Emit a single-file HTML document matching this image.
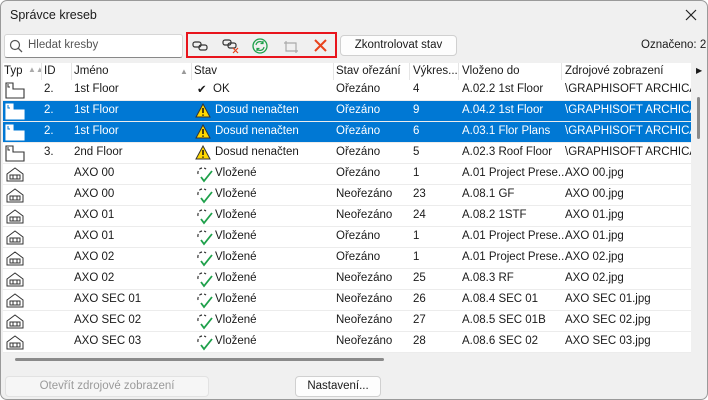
<!DOCTYPE html>
<html><head><meta charset="utf-8"><style>
*{margin:0;padding:0;box-sizing:border-box}
body{width:708px;height:400px;overflow:hidden;background:#fff;font-family:"Liberation Sans",sans-serif;font-size:11.5px;color:#1a1a1a}
#win{position:absolute;left:0;top:0;width:708px;height:400px;background:#f0f0f0;border:1px solid #9a9a9a;border-radius:7px;overflow:hidden}
.a{position:absolute;white-space:nowrap}
#table{position:absolute;left:2px;top:62px;width:688px;height:290px;background:#fff}
.row{position:absolute;left:0;width:688px;height:21px;border-bottom:1px solid #ececec}
.row span{position:absolute;top:3px;white-space:nowrap}
.sel{background:#0078d4;color:#fff}
.hd span{position:absolute;top:2px}
.sep{position:absolute;top:0;width:1px;height:17px;background:#e5e5e5}
.btn{position:absolute;background:#fdfdfd;border:1px solid #d0d0d0;border-radius:4px;text-align:center;line-height:19px}
</style></head><body><div id="win">
<div class="a" style="left:9px;top:7px;font-size:12.5px">Správce kreseb</div>
<svg class="a" style="left:684px;top:8px" width="12" height="12"><path d="M1 1L11 11M11 1L1 11" stroke="#222" stroke-width="1.2"/></svg>
<div class="a" style="left:3px;top:33px;width:179px;height:24px;background:#fff;border:1px solid #d6d6d6;border-bottom-color:#888;border-radius:3px"></div>
<svg class="a" style="left:8px;top:38px" width="14" height="14"><circle cx="6" cy="6" r="4.5" fill="none" stroke="#555" stroke-width="1.2"/><path d="M9.3 9.3L13 13" stroke="#555" stroke-width="1.3"/></svg>
<div class="a" style="left:27px;top:38px;color:#555">Hledat kresby</div>
<div class="a" style="left:185px;top:31px;width:151px;height:26px;border:2px solid #e8141c"></div>
<svg class="a" style="left:190px;top:36px" width="140" height="18">
<g fill="none" stroke="#333" stroke-width="1.2"><rect x="2" y="5" width="8" height="5" rx="2"/><rect x="8" y="8" width="8" height="5" rx="2"/></g>
<g fill="none" stroke="#333" stroke-width="1.2"><rect x="32" y="3" width="8" height="5" rx="2"/><rect x="37" y="6" width="8" height="5" rx="2"/></g><path d="M42 11l5 5M47 11l-5 5" stroke="#e8431c" stroke-width="1.2"/>
<circle cx="69" cy="9" r="7" fill="none" stroke="#1ea04a" stroke-width="1.3"/><path d="M65 8a4 4 0 0 1 7-2M73 10a4 4 0 0 1-7 2M72 4v2.5h-2.5M66 14v-2.5h2.5" fill="none" stroke="#1ea04a" stroke-width="1.2"/>
<path d="M95 4v10h12M93 6h12v10" fill="none" stroke="#aaa" stroke-width="1.2"/>
<path d="M124 3l11 11M135 3l-11 11" stroke="#e8431c" stroke-width="2"/>
</svg>
<div class="btn" style="left:339px;top:34px;width:117px;height:21px">Zkontrolovat stav</div>
<div class="a" style="left:640px;top:38px">Označeno: 2</div>
<div id="table">
<div class="row hd" style="top:0;height:17px;border:0">
<span style="left:1px">Typ</span><span style="left:25px;top:2px;color:#aaa;font-size:8px">▲▲</span><div class="sep" style="left:38px"></div>
<span style="left:41px">ID</span><div class="sep" style="left:68px"></div>
<span style="left:71px">Jméno</span><span style="left:177px;top:4px;color:#999;font-size:8px">▲</span><div class="sep" style="left:188px"></div>
<span style="left:191px">Stav</span><div class="sep" style="left:330px"></div>
<span style="left:333px">Stav ořezání</span><div class="sep" style="left:406px"></div>
<span style="left:410px">Výkres...</span><div class="sep" style="left:455px"></div>
<span style="left:459px">Vloženo do</span><div class="sep" style="left:558px"></div>
<span style="left:562px">Zdrojové zobrazení</span><span style="left:693px;top:3px;font-size:8px">▶</span>
</div>
</div>
<div class="a" style="left:696px;top:96px;width:3px;height:42px;background:#8a8a8a;border-radius:2px"></div>
<div class="a" style="left:14px;top:357px;width:369px;height:3px;background:#8a8a8a;border-radius:2px"></div>
<div class="btn" style="left:4px;top:375px;width:204px;height:21px;color:#9a9a9a;background:#f6f6f6;border-color:#e2e2e2">Otevřít zdrojové zobrazení</div>
<div class="btn" style="left:294px;top:375px;width:86px;height:21px">Nastavení...</div>
</div>
<script>
const rows=[
["L","2.","1st Floor","ok","OK","Ořezáno","4","A.02.2 1st Floor","\\GRAPHISOFT ARCHICAD",0],
["L","2.","1st Floor","w","Dosud nenačten","Ořezáno","9","A.04.2 1st Floor","\\GRAPHISOFT ARCHICAD",1],
["L","2.","1st Floor","w","Dosud nenačten","Ořezáno","6","A.03.1 Flor Plans","\\GRAPHISOFT ARCHICAD",1],
["L","3.","2nd Floor","w","Dosud nenačten","Ořezáno","5","A.02.3 Roof Floor","\\GRAPHISOFT ARCHICAD",0],
["H","","AXO 00","v","Vložené","Ořezáno","1","A.01 Project Prese...","AXO 00.jpg",0],
["H","","AXO 00","v","Vložené","Neořezáno","23","A.08.1 GF","AXO 00.jpg",0],
["H","","AXO 01","v","Vložené","Neořezáno","24","A.08.2 1STF","AXO 01.jpg",0],
["H","","AXO 01","v","Vložené","Ořezáno","1","A.01 Project Prese...","AXO 01.jpg",0],
["H","","AXO 02","v","Vložené","Ořezáno","1","A.01 Project Prese...","AXO 02.jpg",0],
["H","","AXO 02","v","Vložené","Neořezáno","25","A.08.3 RF","AXO 02.jpg",0],
["H","","AXO SEC 01","v","Vložené","Neořezáno","26","A.08.4 SEC 01","AXO SEC 01.jpg",0],
["H","","AXO SEC 02","v","Vložené","Neořezáno","27","A.08.5 SEC 01B","AXO SEC 02.jpg",0],
["H","","AXO SEC 03","v","Vložené","Neořezáno","28","A.08.6 SEC 02","AXO SEC 03.jpg",0]];
let h="";
rows.forEach((r,i)=>{
 const s=r[9],c=s?"#fff":"#333";
 let typ=r[0]=="L"?`<svg style="position:absolute;left:2px;top:2px" width="20" height="17"><path d="M1 1h7v6h11v9H1z" fill="${s?'#fff':'none'}" stroke="${c}" stroke-width="1.1"/><path d="M3 2v3h2" fill="none" stroke="${s?'#0078d4':c}" stroke-width="1"/></svg>`
 :`<svg style="position:absolute;left:3px;top:3px" width="18" height="15"><path d="M1 7L9 1l8 6v7H1z M4 8h10v4H4z M7 8v4M11 8v4" fill="none" stroke="#333" stroke-width="1"/></svg>`;
 let st=r[3]=="ok"?`<span style="left:194px;top:2px">✔</span>`:
 r[3]=="w"?`<svg style="position:absolute;left:192px;top:2px" width="16" height="15"><path d="M8 1L15 14H1z" fill="#ffd800" stroke="#333" stroke-width="1"/><path d="M8 5v5M8 11.5v1.3" stroke="#111" stroke-width="1.5"/></svg>`:
 `<svg style="position:absolute;left:192px;top:2px" width="20" height="17"><path d="M3 8a5 5 0 0 1 8-5" fill="none" stroke="#333" stroke-width="1.2" stroke-dasharray="3 2"/><path d="M6 11l3 4 8-10" fill="none" stroke="#1ea04a" stroke-width="1.8"/></svg>`;
 h+=`<div class="row${s?' sel':''}" style="top:${17+i*21}px">${typ}<span style="left:41px">${r[1]}</span><span style="left:71px">${r[2]}</span>${st}<span style="left:${r[3]=="ok"?210:212}px">${r[4]}</span><span style="left:333px">${r[5]}</span><span style="left:410px">${r[6]}</span><span style="left:459px">${r[7]}</span><span style="left:562px;width:126px;overflow:hidden">${r[8]}</span></div>`;
});
document.getElementById("table").insertAdjacentHTML("beforeend",h);
</script>
</body></html>
